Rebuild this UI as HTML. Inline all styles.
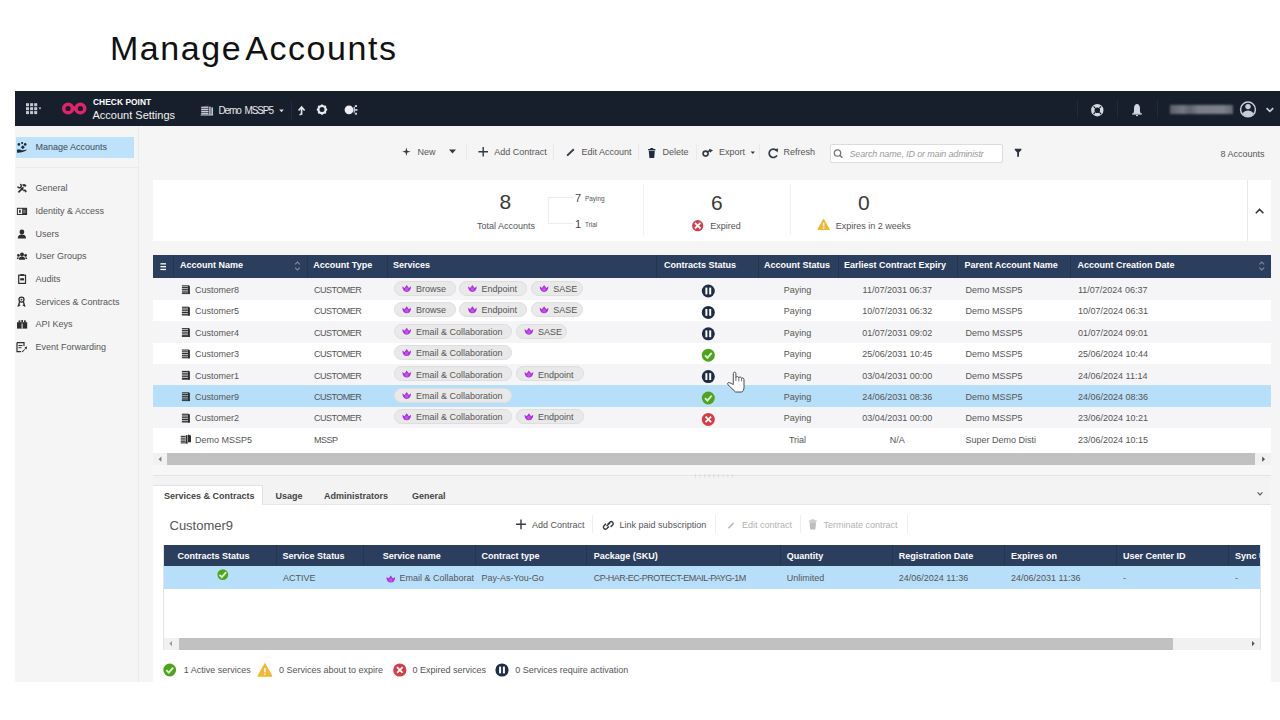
<!DOCTYPE html>
<html><head><meta charset="utf-8">
<style>
*{box-sizing:border-box;margin:0;padding:0}
html,body{width:1280px;height:720px;overflow:hidden;background:#fff}
body{position:relative;font-family:"Liberation Sans",sans-serif;font-size:9px;color:#555}
.a{position:absolute;white-space:nowrap}
#title{left:110px;top:28px;font-size:34px;letter-spacing:1.55px;word-spacing:-6px;color:#111;line-height:40px}
#nav{left:15px;top:91px;width:1265px;height:34.5px;background:#181f2c}
#side{left:15px;top:126px;width:124px;height:556px;background:#f5f5f5;border-right:1px solid #ebebeb}
#main{left:139px;top:126px;width:1141px;height:556px;background:#f5f5f5}
.t9{font-size:9px;line-height:9px}
.hw{color:#fff;font-weight:bold}
.up{letter-spacing:-0.5px}
.card{background:#fff}
.sep{position:absolute;width:1px;background:#eaeaea}
.hdr{background:#2c3e5d;color:#fff;font-weight:bold}
.row{position:absolute;left:153px;width:1118px;height:22px}
.chip{position:absolute;height:15px;border-radius:8px;background:#e9e9ea;border:1px solid #dedede;color:#555;line-height:14px}
</style></head><body>
<div id="title" class="a">Manage Accounts</div>

<!-- NAVBAR -->
<div id="nav" class="a"></div>
<div class="a" style="left:93px;top:97.5px;font-size:8.4px;line-height:9px;font-weight:bold;color:#fff;letter-spacing:0.05px">CHECK POINT</div>
<div class="a" style="left:92.5px;top:109.5px;font-size:11px;line-height:11px;color:#f2f2f2">Account Settings</div>
<div class="a" style="left:218.5px;top:106px;font-size:10px;line-height:10px;color:#e8e8ea;letter-spacing:-1.1px;word-spacing:2px">Demo MSSP5</div>
<div class="a" style="left:291px;top:100.5px;width:1px;height:18.5px;background:#232a38"></div>
<div class="a" style="left:1076.5px;top:99.5px;width:1px;height:18px;background:#232a38"></div>
<div class="a" style="left:1116.5px;top:99.5px;width:1px;height:18px;background:#232a38"></div>
<div class="a" style="left:1156.5px;top:99.5px;width:1px;height:18px;background:#232a38"></div>
<div class="a" style="left:1170px;top:105px;width:63px;height:9px;background:linear-gradient(90deg,#5d616a 0,#767a83 20%,#5f636c 32%,#7a7e87 45%,#7d818a 85%,#62666f 100%);filter:blur(1px)"></div>

<!-- SIDEBAR -->
<div id="side" class="a"></div>
<div class="a" style="left:16px;top:137px;width:118.4px;height:20.8px;background:#bee2fa"></div>
<div class="a" style="left:15px;top:166.5px;width:123px;height:1px;background:#ebebeb"></div>
<div class="a t9" style="left:35.5px;top:143px;color:#3d4a58">Manage Accounts</div>
<div class="a t9" style="left:35.5px;top:184px">General</div>
<div class="a t9" style="left:35.5px;top:207px">Identity &amp; Access</div>
<div class="a t9" style="left:35.5px;top:230px">Users</div>
<div class="a t9" style="left:35.5px;top:252px">User Groups</div>
<div class="a t9" style="left:35.5px;top:275px">Audits</div>
<div class="a t9" style="left:35.5px;top:298px">Services &amp; Contracts</div>
<div class="a t9" style="left:35.5px;top:320px">API Keys</div>
<div class="a t9" style="left:35.5px;top:343px">Event Forwarding</div>
<div id="main" class="a"></div>
<!-- toolbar -->
<div class="a t9" style="left:417.5px;top:148px">New</div>
<div class="a t9" style="left:494.3px;top:148px">Add Contract</div>
<div class="a t9" style="left:581.5px;top:148px">Edit Account</div>
<div class="a t9" style="left:662.5px;top:148px">Delete</div>
<div class="a t9" style="left:718.9px;top:148px">Export</div>
<div class="a t9" style="left:783.5px;top:148px">Refresh</div>
<div class="sep" style="left:466px;top:144px;height:16px"></div>
<div class="sep" style="left:553px;top:144px;height:16px"></div>
<div class="sep" style="left:638px;top:144px;height:16px"></div>
<div class="sep" style="left:696px;top:144px;height:16px"></div>
<div class="sep" style="left:759px;top:144px;height:16px"></div>
<div class="a" style="left:829.5px;top:144px;width:173px;height:18.5px;background:#fff;border:1px solid #dcdcdc;border-radius:2px"></div>
<div class="a t9" style="left:849.5px;top:150px;font-style:italic;color:#999;width:134px;overflow:hidden;letter-spacing:-0.15px">Search name, ID or main administr</div>
<div class="a t9" style="left:1220.4px;top:150px">8 Accounts</div>
<!-- TABLE START -->
<div class="a hdr" style="left:153px;top:254.8px;width:1118px;height:23px"></div>
<div class="a" style="left:173px;top:254.8px;width:1px;height:23px;background:#24354f"></div>
<div class="a" style="left:306.5px;top:254.8px;width:1px;height:23px;background:#24354f"></div>
<div class="a" style="left:386.5px;top:254.8px;width:1px;height:23px;background:#24354f"></div>
<div class="a" style="left:656px;top:254.8px;width:1px;height:23px;background:#24354f"></div>
<div class="a" style="left:757.5px;top:254.8px;width:1px;height:23px;background:#24354f"></div>
<div class="a" style="left:837.5px;top:254.8px;width:1px;height:23px;background:#24354f"></div>
<div class="a" style="left:956.5px;top:254.8px;width:1px;height:23px;background:#24354f"></div>
<div class="a" style="left:1070.2px;top:254.8px;width:1px;height:23px;background:#24354f"></div>
<div class="a t9 hw" style="left:180px;top:261px">Account Name</div>
<div class="a t9 hw" style="left:313.3px;top:261px">Account Type</div>
<div class="a t9 hw" style="left:393px;top:261px">Services</div>
<div class="a t9 hw" style="left:664px;top:261px">Contracts Status</div>
<div class="a t9 hw" style="left:764px;top:261px">Account Status</div>
<div class="a t9 hw" style="left:844px;top:261px">Earliest Contract Expiry</div>
<div class="a t9 hw" style="left:964.5px;top:261px">Parent Account Name</div>
<div class="a t9 hw" style="left:1077.6px;top:261px">Account Creation Date</div>
<div class="a" style="left:153px;top:278.4px;width:1118px;height:21.4px;background:#f5f5f7"></div>
<div class="a t9" style="left:195px;top:285.9px">Customer8</div>
<div class="a t9 up" style="left:314px;top:285.9px">CUSTOMER</div>
<div class="chip" style="left:393.6px;top:280.7px;width:62px"></div>
<div class="a t9" style="left:415.9px;top:284.9px">Browse</div>
<div class="chip" style="left:459.3px;top:280.7px;width:68px"></div>
<div class="a t9" style="left:481.6px;top:284.9px">Endpoint</div>
<div class="chip" style="left:531.0px;top:280.7px;width:51.5px"></div>
<div class="a t9" style="left:553.3px;top:284.9px">SASE</div>
<div class="a t9" style="left:757.5px;width:80px;text-align:center;top:285.9px">Paying</div>
<div class="a t9" style="left:837.5px;width:119.5px;text-align:center;top:285.9px">11/07/2031 06:37</div>
<div class="a t9" style="left:965.5px;top:285.9px">Demo MSSP5</div>
<div class="a t9" style="left:1078px;top:285.9px">11/07/2024 06:37</div>
<div class="a" style="left:153px;top:299.8px;width:1118px;height:21.4px;background:#fff"></div>
<div class="a t9" style="left:195px;top:307.3px">Customer5</div>
<div class="a t9 up" style="left:314px;top:307.3px">CUSTOMER</div>
<div class="chip" style="left:393.6px;top:302.1px;width:62px"></div>
<div class="a t9" style="left:415.9px;top:306.3px">Browse</div>
<div class="chip" style="left:459.3px;top:302.1px;width:68px"></div>
<div class="a t9" style="left:481.6px;top:306.3px">Endpoint</div>
<div class="chip" style="left:531.0px;top:302.1px;width:51.5px"></div>
<div class="a t9" style="left:553.3px;top:306.3px">SASE</div>
<div class="a t9" style="left:757.5px;width:80px;text-align:center;top:307.3px">Paying</div>
<div class="a t9" style="left:837.5px;width:119.5px;text-align:center;top:307.3px">10/07/2031 06:32</div>
<div class="a t9" style="left:965.5px;top:307.3px">Demo MSSP5</div>
<div class="a t9" style="left:1078px;top:307.3px">10/07/2024 06:31</div>
<div class="a" style="left:153px;top:321.2px;width:1118px;height:21.4px;background:#f5f5f7"></div>
<div class="a t9" style="left:195px;top:328.7px">Customer4</div>
<div class="a t9 up" style="left:314px;top:328.7px">CUSTOMER</div>
<div class="chip" style="left:393.6px;top:323.5px;width:118.5px"></div>
<div class="a t9" style="left:415.9px;top:327.7px">Email &amp; Collaboration</div>
<div class="chip" style="left:515.8000000000001px;top:323.5px;width:51.5px"></div>
<div class="a t9" style="left:538.1px;top:327.7px">SASE</div>
<div class="a t9" style="left:757.5px;width:80px;text-align:center;top:328.7px">Paying</div>
<div class="a t9" style="left:837.5px;width:119.5px;text-align:center;top:328.7px">01/07/2031 09:02</div>
<div class="a t9" style="left:965.5px;top:328.7px">Demo MSSP5</div>
<div class="a t9" style="left:1078px;top:328.7px">01/07/2024 09:01</div>
<div class="a" style="left:153px;top:342.6px;width:1118px;height:21.4px;background:#fff"></div>
<div class="a t9" style="left:195px;top:350.1px">Customer3</div>
<div class="a t9 up" style="left:314px;top:350.1px">CUSTOMER</div>
<div class="chip" style="left:393.6px;top:344.9px;width:118.5px"></div>
<div class="a t9" style="left:415.9px;top:349.1px">Email &amp; Collaboration</div>
<div class="a t9" style="left:757.5px;width:80px;text-align:center;top:350.1px">Paying</div>
<div class="a t9" style="left:837.5px;width:119.5px;text-align:center;top:350.1px">25/06/2031 10:45</div>
<div class="a t9" style="left:965.5px;top:350.1px">Demo MSSP5</div>
<div class="a t9" style="left:1078px;top:350.1px">25/06/2024 10:44</div>
<div class="a" style="left:153px;top:364.0px;width:1118px;height:21.4px;background:#f5f5f7"></div>
<div class="a t9" style="left:195px;top:371.5px">Customer1</div>
<div class="a t9 up" style="left:314px;top:371.5px">CUSTOMER</div>
<div class="chip" style="left:393.6px;top:366.3px;width:118.5px"></div>
<div class="a t9" style="left:415.9px;top:370.5px">Email &amp; Collaboration</div>
<div class="chip" style="left:515.8000000000001px;top:366.3px;width:68px"></div>
<div class="a t9" style="left:538.1px;top:370.5px">Endpoint</div>
<div class="a t9" style="left:757.5px;width:80px;text-align:center;top:371.5px">Paying</div>
<div class="a t9" style="left:837.5px;width:119.5px;text-align:center;top:371.5px">03/04/2031 00:00</div>
<div class="a t9" style="left:965.5px;top:371.5px">Demo MSSP5</div>
<div class="a t9" style="left:1078px;top:371.5px">24/06/2024 11:14</div>
<div class="a" style="left:153px;top:385.4px;width:1118px;height:21.4px;background:#b8dff9"></div>
<div class="a t9" style="left:195px;top:392.9px">Customer9</div>
<div class="a t9 up" style="left:314px;top:392.9px">CUSTOMER</div>
<div class="chip" style="left:393.6px;top:387.7px;width:118.5px"></div>
<div class="a t9" style="left:415.9px;top:391.9px">Email &amp; Collaboration</div>
<div class="a t9" style="left:757.5px;width:80px;text-align:center;top:392.9px">Paying</div>
<div class="a t9" style="left:837.5px;width:119.5px;text-align:center;top:392.9px">24/06/2031 08:36</div>
<div class="a t9" style="left:965.5px;top:392.9px">Demo MSSP5</div>
<div class="a t9" style="left:1078px;top:392.9px">24/06/2024 08:36</div>
<div class="a" style="left:153px;top:406.8px;width:1118px;height:21.4px;background:#f5f5f7"></div>
<div class="a t9" style="left:195px;top:414.3px">Customer2</div>
<div class="a t9 up" style="left:314px;top:414.3px">CUSTOMER</div>
<div class="chip" style="left:393.6px;top:409.1px;width:118.5px"></div>
<div class="a t9" style="left:415.9px;top:413.3px">Email &amp; Collaboration</div>
<div class="chip" style="left:515.8000000000001px;top:409.1px;width:68px"></div>
<div class="a t9" style="left:538.1px;top:413.3px">Endpoint</div>
<div class="a t9" style="left:757.5px;width:80px;text-align:center;top:414.3px">Paying</div>
<div class="a t9" style="left:837.5px;width:119.5px;text-align:center;top:414.3px">03/04/2031 00:00</div>
<div class="a t9" style="left:965.5px;top:414.3px">Demo MSSP5</div>
<div class="a t9" style="left:1078px;top:414.3px">23/06/2024 10:21</div>
<div class="a" style="left:153px;top:428.2px;width:1118px;height:21.4px;background:#fff"></div>
<div class="a t9" style="left:195px;top:435.7px">Demo MSSP5</div>
<div class="a t9 up" style="left:314px;top:435.7px">MSSP</div>
<div class="a t9" style="left:757.5px;width:80px;text-align:center;top:435.7px">Trial</div>
<div class="a t9" style="left:837.5px;width:119.5px;text-align:center;top:435.7px">N/A</div>
<div class="a t9" style="left:965.5px;top:435.7px">Super Demo Disti</div>
<div class="a t9" style="left:1078px;top:435.7px">23/06/2024 10:15</div>
<!-- TABLE END -->
<!-- BOTTOM START -->
<div class="a" style="left:153px;top:449.6px;width:1118px;height:3.8px;background:#fff"></div>
<div class="a" style="left:153px;top:453.4px;width:1118px;height:11.6px;background:#f1f1f1"></div>
<div class="a" style="left:167.4px;top:453.4px;width:1088px;height:11.6px;background:#c1c1c1"></div>
<div class="a" style="left:153px;top:465px;width:1118px;height:10px;background:#f7f7f7"></div>
<div class="a" style="left:153px;top:475px;width:1118px;height:1px;background:#e4e4e4"></div>
<div class="a" style="left:153px;top:476px;width:1118px;height:28.5px;background:#f3f3f3"></div>
<div class="a" style="left:153px;top:504px;width:1118px;height:1px;background:#e6e6e6"></div>
<div class="a" style="left:153px;top:485.4px;width:110.3px;height:19.6px;background:#fff;border-top:1px solid #e2e2e2;border-right:1px solid #e2e2e2"></div>
<div class="a t9" style="left:164px;top:491.5px;font-weight:bold;color:#444">Services &amp; Contracts</div>
<div class="a t9" style="left:275.4px;top:491.5px;font-weight:bold;color:#444">Usage</div>
<div class="a t9" style="left:323.9px;top:491.5px;font-weight:bold;color:#444">Administrators</div>
<div class="a t9" style="left:412px;top:491.5px;font-weight:bold;color:#444">General</div>
<div class="a card" style="left:153px;top:505px;width:1118px;height:177px"></div>
<div class="a" style="left:169.5px;top:519px;font-size:13px;line-height:13px;color:#555">Customer9</div>
<div class="a t9" style="left:532px;top:520.5px;color:#555">Add Contract</div>
<div class="a t9" style="left:619.6px;top:520.5px;color:#555">Link paid subscription</div>
<div class="a t9" style="left:742px;top:520.5px;color:#b2b2b2">Edit contract</div>
<div class="a t9" style="left:823.5px;top:520.5px;color:#b2b2b2">Terminate contract</div>
<div class="sep" style="left:591.8px;top:515px;height:18px;background:#eeeeee"></div>
<div class="sep" style="left:714.9px;top:515px;height:18px;background:#eeeeee"></div>
<div class="sep" style="left:800px;top:515px;height:18px;background:#eeeeee"></div>
<div class="sep" style="left:907.2px;top:515px;height:18px;background:#eeeeee"></div>
<div class="a" style="left:163px;top:545px;width:1097.5px;height:105px;background:#fff;border-left:1px solid #e4e4e4;border-right:1px solid #e4e4e4"></div>
<div class="a hdr" style="left:164px;top:545px;width:1096px;height:21px"></div>
<div class="a" style="left:275.5px;top:545px;width:1px;height:21px;background:#24354f"></div>
<div class="a" style="left:362.7px;top:545px;width:1px;height:21px;background:#24354f"></div>
<div class="a" style="left:474.5px;top:545px;width:1px;height:21px;background:#24354f"></div>
<div class="a" style="left:586px;top:545px;width:1px;height:21px;background:#24354f"></div>
<div class="a" style="left:779.6px;top:545px;width:1px;height:21px;background:#24354f"></div>
<div class="a" style="left:891.7px;top:545px;width:1px;height:21px;background:#24354f"></div>
<div class="a" style="left:1003.8px;top:545px;width:1px;height:21px;background:#24354f"></div>
<div class="a" style="left:1116px;top:545px;width:1px;height:21px;background:#24354f"></div>
<div class="a" style="left:1228px;top:545px;width:1px;height:21px;background:#24354f"></div>
<div class="a t9 hw" style="left:177.4px;top:552px;">Contracts Status</div>
<div class="a t9 hw" style="left:282.6px;top:552px;">Service Status</div>
<div class="a t9 hw" style="left:382.8px;top:552px;">Service name</div>
<div class="a t9 hw" style="left:481.6px;top:552px;">Contract type</div>
<div class="a t9 hw" style="left:593.7px;top:552px;">Package (SKU)</div>
<div class="a t9 hw" style="left:786.7px;top:552px;">Quantity</div>
<div class="a t9 hw" style="left:898.8px;top:552px;">Registration Date</div>
<div class="a t9 hw" style="left:1011px;top:552px;">Expires on</div>
<div class="a t9 hw" style="left:1123px;top:552px;">User Center ID</div>
<div class="a t9 hw" style="left:1235px;top:552px;width:25px;overflow:hidden;">Sync U</div>
<div class="a" style="left:164px;top:566px;width:1096px;height:23px;background:#b8dff9"></div>
<div class="a t9" style="left:283px;top:573.5px;">ACTIVE</div>
<div class="a t9" style="left:399.6px;top:573.5px;width:74.4px;overflow:hidden;">Email &amp; Collaborat</div>
<div class="a t9" style="left:481.6px;top:573.5px;">Pay-As-You-Go</div>
<div class="a t9" style="left:593.7px;top:573.5px;letter-spacing:-0.5px;">CP-HAR-EC-PROTECT-EMAIL-PAYG-1M</div>
<div class="a t9" style="left:786.7px;top:573.5px;">Unlimited</div>
<div class="a t9" style="left:898.8px;top:573.5px;">24/06/2024 11:36</div>
<div class="a t9" style="left:1011px;top:573.5px;">24/06/2031 11:36</div>
<div class="a t9" style="left:1123px;top:573.5px;">-</div>
<div class="a t9" style="left:1235px;top:573.5px;">-</div>
<div class="a" style="left:164px;top:637.5px;width:1096px;height:12px;background:#f1f1f1"></div>
<div class="a" style="left:178.5px;top:637.5px;width:994px;height:12px;background:#c1c1c1"></div>
<div class="a t9" style="left:183.7px;top:666px">1 Active services</div>
<div class="a t9" style="left:279px;top:666px">0 Services about to expire</div>
<div class="a t9" style="left:412.5px;top:666px">0 Expired services</div>
<div class="a t9" style="left:515.3px;top:666px">0 Services require activation</div>
<!-- BOTTOM END -->
<!-- summary card -->
<div class="a card" style="left:153px;top:180px;width:1118px;height:60.5px"></div>
<div class="sep" style="left:1247px;top:180px;height:60.5px;background:#e8e8e8"></div>
<div class="sep" style="left:642.5px;top:184px;height:51px;background:#f0f0f0"></div>
<div class="sep" style="left:790px;top:184px;height:51px;background:#f0f0f0"></div>
<div class="a" style="left:499.5px;top:191px;font-size:21px;line-height:21px;color:#3a3a3a">8</div>
<div class="a t9" style="left:477px;top:221.5px">Total Accounts</div>
<div class="a" style="left:548px;top:196.5px;width:25px;height:27px;border:1px solid #ececec;border-right:none"></div>
<div class="a" style="left:575px;top:192.5px;font-size:11px;line-height:11px;color:#444">7</div>
<div class="a" style="left:585px;top:194.5px;font-size:6.4px;line-height:7px;color:#555">Paying</div>
<div class="a" style="left:575px;top:219px;font-size:11px;line-height:11px;color:#444">1</div>
<div class="a" style="left:585px;top:221px;font-size:6.4px;line-height:7px;color:#555">Trial</div>
<div class="a" style="left:711px;top:192px;font-size:21px;line-height:21px;color:#3a3a3a">6</div>
<div class="a t9" style="left:710.3px;top:221.5px">Expired</div>
<div class="a" style="left:858px;top:192px;font-size:21px;line-height:21px;color:#3a3a3a">0</div>
<div class="a t9" style="left:835.7px;top:221.5px">Expires in 2 weeks</div>

<svg class="a" style="left:0;top:0;z-index:10" width="1280" height="720" viewBox="0 0 1280 720">
<!-- grid icon -->
<g fill="#c5c9d1">
<rect x="26" y="103.2" width="3" height="3"/><rect x="30.1" y="103.2" width="3" height="3"/><rect x="34.2" y="103.2" width="3" height="3"/>
<rect x="26" y="107.2" width="3" height="3"/><rect x="30.1" y="107.2" width="3" height="3"/><rect x="34.2" y="107.2" width="3" height="3"/>
<rect x="26" y="111.1" width="3" height="3"/><rect x="30.1" y="111.1" width="3" height="3"/><rect x="34.2" y="111.1" width="3" height="3"/>
<path d="M38.6,107.4 L41.4,107.4 L40,109.4Z"/>
</g>
<!-- logo -->
<g fill="none" stroke="#e0246c"><circle cx="68.1" cy="108.5" r="4.35" stroke-width="3.5"/><circle cx="80.4" cy="108.5" r="4.35" stroke-width="3.5"/>
<path d="M71.2,105.6 L77.3,111.4 M71.2,111.4 L77.3,105.6" stroke-width="2.6"/></g>
<!-- building nav -->
<g fill="#c9cdd4">
<path d="M201.2,106.6 L208.4,105.4 L208.4,115 L201.2,115Z" opacity="0.35"/>
<rect x="201.2" y="106.8" width="7.2" height="1.1"/><rect x="201.2" y="108.9" width="7.2" height="1.1"/><rect x="201.2" y="111" width="7.2" height="1.1"/><rect x="201.2" y="113.1" width="7.2" height="1.1"/>
<rect x="209.2" y="106.6" width="1.4" height="8.4"/><rect x="211.4" y="107.4" width="1.6" height="7.6"/>
<rect x="200.6" y="114.6" width="12.6" height="0.9"/>
</g>
<path d="M279.2,109.6 L283.8,109.6 L281.5,112.2Z" fill="#d8dbe0"/>
<!-- upload -->
<path d="M301.6,114.8 L301.6,108.2 M298.6,110.6 L301.6,107 L304.6,110.6" fill="none" stroke="#e6e8ec" stroke-width="1.6"/>
<path d="M301.6,114 L299.5,114.8" stroke="#e6e8ec" stroke-width="1.4"/>
<!-- gear -->
<circle cx="322" cy="109.6" r="3.6" fill="none" stroke="#e8eaee" stroke-width="2.2"/>
<g stroke="#e8eaee" stroke-width="1.8">
<path d="M322,104.4 V106 M322,113.2 V114.8 M316.8,109.6 H318.4 M325.6,109.6 H327.2 M318.3,105.9 L319.4,107 M324.6,112.2 L325.7,113.3 M318.3,113.3 L319.4,112.2 M324.6,107 L325.7,105.9"/>
</g>
<!-- broadcast -->
<circle cx="349" cy="109.8" r="4.4" fill="#eceef2"/>
<g fill="#d8dbe0"><rect x="354.8" y="105.2" width="2.2" height="1.8"/><rect x="355.2" y="109" width="2.2" height="1.8"/><rect x="354.8" y="112.8" width="2.2" height="1.8"/><rect x="353.6" y="107" width="1.3" height="5.6"/></g>
<!-- lifebuoy -->
<circle cx="1097.3" cy="110.2" r="4.5" fill="none" stroke="#d5d9e2" stroke-width="3.4"/>
<g stroke="#181f2c" stroke-width="1.1"><path d="M1093.5,106.4 L1095.3,108.2 M1101.1,106.4 L1099.3,108.2 M1093.5,114 L1095.3,112.2 M1101.1,114 L1099.3,112.2"/></g>
<!-- bell -->
<path d="M1133,113.8 C1134.3,112.2 1134,110.5 1134,108.5 C1134,105.6 1135.3,104 1137,104 C1138.7,104 1140,105.6 1140,108.5 C1140,110.5 1139.7,112.2 1141,113.8 Z" fill="#d3d8e2"/>
<rect x="1132.2" y="113.3" width="9.6" height="1.3" fill="#d3d8e2"/>
<rect x="1136" y="115" width="2" height="1.1" fill="#c9ced8"/>
<!-- avatar -->
<circle cx="1248" cy="109.4" r="7.4" fill="none" stroke="#c8ccd6" stroke-width="1.5"/>
<circle cx="1248" cy="106.6" r="2.7" fill="#c8ccd6"/>
<path d="M1242.6,113.6 C1243.8,111 1246,110.4 1248,110.4 C1250,110.4 1252.2,111 1253.4,113.6 C1252,115.6 1250,116.5 1248,116.5 C1246,116.5 1244,115.6 1242.6,113.6Z" fill="#c8ccd6"/>
<path d="M1266.6,108.2 L1269.8,111.4 L1273.2,108.2" fill="none" stroke="#c8ccd6" stroke-width="1.7"/>
<!-- MISC START -->
<g fill="#1f2b3e"><circle cx="18.9" cy="144.4" r="1.3"/><circle cx="22.1" cy="143" r="1.1"/><circle cx="25.2" cy="144.4" r="1.3"/><path d="M22.8,145.3 L24.8,147.3 L22.8,149.3 L20.8,147.3Z"/><path d="M17,149.4 L20.5,149.4 C21.5,150.4 23,150.6 26.5,149.6 L26.5,150.3 C24,151.9 21,152.9 17,152.7Z"/></g>
<g fill="none" stroke="#2e2e2e"><path d="M18.4,192.4 L23.4,187.4" stroke-width="1.7"/><path d="M20.2,184.2 A1.9,1.9 0 1 1 17.6,186.6" stroke-width="1.5"/><path d="M20.6,187.6 L23.4,190.4" stroke-width="1.3"/></g><g fill="#2e2e2e"><path d="M22,184.4 L24.6,184 L26.6,185.6 L25.6,186.8 L23.2,186.2Z"/><path d="M23.2,190 C24.2,189.2 26,189.4 26.8,191.2 L25.6,192.8 C25.4,191.6 24.6,191 23.6,191.4Z"/></g>
<rect x="17.4" y="208.3" width="9.2" height="6.2" fill="none" stroke="#2e2e2e" stroke-width="1"/><rect x="22.2" y="208.3" width="4.4" height="6.2" fill="#2e2e2e"/><rect x="23.2" y="209.6" width="2.4" height="3.6" fill="#777"/><ellipse cx="19.9" cy="211.4" rx="0.9" ry="1.8" fill="#2e2e2e"/>
<g fill="#2e2e2e"><circle cx="21.9" cy="232" r="2.4"/><path d="M17.8,238.4 C17.8,235.6 19.6,234.6 21.9,234.6 C24.2,234.6 26,235.6 26,238.4Z"/></g>
<g fill="#2e2e2e"><circle cx="22" cy="254.4" r="2"/><path d="M18.8,259.8 C18.8,257.6 20.2,256.6 22,256.6 C23.8,256.6 25.2,257.6 25.2,259.8Z"/><circle cx="18.4" cy="255.4" r="1.4"/><path d="M16.8,259 C16.8,257.6 17.6,256.9 18.6,256.9 L18.4,259Z"/><circle cx="25.6" cy="255.4" r="1.4"/><path d="M27.2,259 C27.2,257.6 26.4,256.9 25.4,256.9 L25.6,259Z"/></g>
<rect x="18.7" y="275.2" width="6.8" height="8.2" fill="none" stroke="#2e2e2e" stroke-width="1.2"/><rect x="20.3" y="274.1" width="3.6" height="1.8" fill="#2e2e2e"/><rect x="20.2" y="278.2" width="3.8" height="2.2" fill="#2e2e2e"/>
<circle cx="21.5" cy="299.6" r="2.5" fill="none" stroke="#2e2e2e" stroke-width="1.3"/><circle cx="21.5" cy="299.6" r="0.9" fill="#2e2e2e"/><path d="M19.6,301.8 L18.4,305.8 L20.2,305 M23.4,301.8 L24.6,305.8 L22.8,305" fill="none" stroke="#2e2e2e" stroke-width="1.3"/>
<g fill="#2e2e2e"><rect x="17" y="322.2" width="10.2" height="6.4"/><rect x="18.6" y="320.4" width="1.8" height="2"/><rect x="21.4" y="320" width="1.6" height="2.2"/><rect x="24" y="320.4" width="1.8" height="2"/></g><rect x="21.6" y="323.4" width="1" height="5.2" fill="#f4f4f4"/>
<path d="M17,342.6 L24,342.6 L24,346 M17,342.6 L17,351.6 L21,351.6" fill="none" stroke="#2e2e2e" stroke-width="1.2"/><rect x="18.5" y="345" width="4" height="1" fill="#2e2e2e"/><rect x="18.5" y="347.2" width="3" height="1" fill="#2e2e2e"/><path d="M21.5,351.8 L25.5,348.2 L24.4,347.2 L27,346.6 L26.6,349.4 L25.6,348.8 L22.6,352.2Z" fill="#2e2e2e"/>
<path d="M406.4,147.4 L407.3,150.8 L410.7,151.7 L407.3,152.6 L406.4,156 L405.5,152.6 L402.1,151.7 L405.5,150.8Z" fill="#333a45"/>
<path d="M449,149.6 L456,149.6 L452.5,153.6Z" fill="#333a45"/>
<path d="M483.2,147 V156.6 M478.4,151.8 H488" stroke="#333a45" stroke-width="1.4"/>
<path d="M567.4,155.4 L573.8,149.2" stroke="#333a45" stroke-width="1.9"/><path d="M566.6,156.2 L567.2,154.4 L568.4,155.6Z" fill="#333a45"/>
<g fill="#1f2b3e"><rect x="648.2" y="149" width="7.2" height="1.4"/><rect x="650.4" y="148" width="2.8" height="1.2"/><path d="M648.8,151 L654.8,151 L654.2,158 L649.4,158Z"/></g>
<circle cx="705.6" cy="153.6" r="2.5" fill="none" stroke="#333a45" stroke-width="1.6"/><path d="M706.8,152.4 L710,150.4" stroke="#333a45" stroke-width="1.6"/><path d="M709,148.8 L713,150.2 L710,152.8Z" fill="#333a45"/>
<path d="M750.6,151.4 L755,151.4 L752.8,154Z" fill="#333a45"/>
<path d="M776.4,150.4 A4.2,4.2 0 1 0 777,155.4" fill="none" stroke="#333a45" stroke-width="1.7"/><path d="M774.2,149.2 L778.2,148.6 L777.6,152.6Z" fill="#333a45"/>
<circle cx="837.5" cy="153" r="3.2" fill="none" stroke="#777" stroke-width="1.3"/><path d="M839.8,155.4 L842.4,157.8" stroke="#777" stroke-width="1.5"/>
<path d="M1014.8,148.8 L1021.4,148.8 L1021.4,150 L1019,152.6 L1019,156.8 L1017.2,156.8 L1017.2,152.6 L1014.8,150Z" fill="#2a3240"/>
<path d="M1255.8,213.2 L1259.6,209.4 L1263.4,213.2" fill="none" stroke="#333" stroke-width="1.5"/>
<circle cx="697.70" cy="225.70" r="5.6" fill="#d83a48"/><path d="M694.90,222.90 L700.50,228.50 M700.50,222.90 L694.90,228.50" stroke="#fff" stroke-width="1.9"/>
<path d="M823.60,219.20 L829.40,229.60 L817.80,229.60Z" fill="#f1b72e" stroke="#f1b72e" stroke-width="1" stroke-linejoin="round"/><rect x="822.85" y="222.84" width="1.5" height="3.64" fill="#fff"/><rect x="822.85" y="227.31" width="1.5" height="1.5" fill="#fff"/>
<g fill="#fff"><rect x="160.4" y="263.2" width="5.6" height="1.3"/><rect x="160.4" y="266" width="5.6" height="1.3"/><rect x="160.4" y="268.8" width="5.6" height="1.3"/></g>
<path d="M295,264.4 L297.4,262 L299.8,264.4 M295,267.6 L297.4,270 L299.8,267.6" fill="none" stroke="#7d8aa0" stroke-width="1.1"/>
<path d="M1259.4,264.4 L1261.8,262 L1264.2,264.4 M1259.4,267.6 L1261.8,270 L1264.2,267.6" fill="none" stroke="#7d8aa0" stroke-width="1.1"/>
<path d="M158.6,459.2 L161.4,456.6 L161.4,461.8Z" fill="#7a7a7a"/>
<path d="M1265,459.2 L1262.2,456.6 L1262.2,461.8Z" fill="#505050"/>
<path d="M169.4,643.6 L172,641 L172,646.2Z" fill="#9a9a9a"/>
<path d="M1254.6,643.6 L1252,641 L1252,646.2Z" fill="#505050"/>
<g fill="#cfcfcf"><rect x="695.0" y="474.2" width="1" height="1"/><rect x="695.0" y="476.4" width="1" height="1"/><rect x="699.6" y="474.2" width="1" height="1"/><rect x="699.6" y="476.4" width="1" height="1"/><rect x="704.2" y="474.2" width="1" height="1"/><rect x="704.2" y="476.4" width="1" height="1"/><rect x="708.8" y="474.2" width="1" height="1"/><rect x="708.8" y="476.4" width="1" height="1"/><rect x="713.4" y="474.2" width="1" height="1"/><rect x="713.4" y="476.4" width="1" height="1"/><rect x="718.0" y="474.2" width="1" height="1"/><rect x="718.0" y="476.4" width="1" height="1"/><rect x="722.6" y="474.2" width="1" height="1"/><rect x="722.6" y="476.4" width="1" height="1"/><rect x="727.2" y="474.2" width="1" height="1"/><rect x="727.2" y="476.4" width="1" height="1"/><rect x="731.8" y="474.2" width="1" height="1"/><rect x="731.8" y="476.4" width="1" height="1"/></g>
<path d="M1257.6,492.4 L1260,494.8 L1262.4,492.4" fill="none" stroke="#555" stroke-width="1.2"/>
<path d="M521,519.4 V529.2 M516.1,524.3 H525.9" stroke="#333a45" stroke-width="1.4"/>
<g fill="none" stroke="#333a45" stroke-width="1.4"><path d="M607.6,524.4 L610,522 A2,2 0 0 1 612.8,524.8 L610.6,527"/><path d="M609,526.4 L606.6,528.8 A2,2 0 0 1 603.8,526 L606,523.8"/><path d="M606.6,526.2 L610,522.8"/></g>
<path d="M728.4,528.2 L733.6,523" stroke="#b8b8b8" stroke-width="1.5"/>
<g fill="#bdbdbd"><rect x="809" y="520.4" width="7.6" height="1.3"/><rect x="811.2" y="519.4" width="3.2" height="1.2"/><path d="M809.6,522.2 L816,522.2 L815.4,529.4 L810.2,529.4Z"/></g>
<circle cx="222.80" cy="574.60" r="5.4" fill="#4ea41c"/><path d="M219.50,574.80 L221.90,577.20 L226.20,572.20" fill="none" stroke="#dff5cf" stroke-width="1.9"/>
<path d="M386.40,577.00 L388.60,578.60 L390.80,575.60 L393.00,578.60 L395.20,577.00 C395.00,580.80 393.30,582.60 390.80,582.60 C388.30,582.60 386.60,580.80 386.40,577.00Z" fill="#a532d6"/><ellipse cx="390.80" cy="580.00" rx="1.8" ry="2" fill="#c94ef0"/>
<circle cx="169.70" cy="670.00" r="6.4" fill="#4ea41c"/><path d="M166.40,670.20 L168.80,672.60 L173.10,667.60" fill="none" stroke="#dff5cf" stroke-width="1.9"/>
<path d="M264.90,663.60 L272.00,676.20 L257.80,676.20Z" fill="#f1b72e" stroke="#f1b72e" stroke-width="1" stroke-linejoin="round"/><rect x="264.15" y="668.01" width="1.5" height="4.41" fill="#fff"/><rect x="264.15" y="673.43" width="1.5" height="1.5" fill="#fff"/>
<circle cx="399.80" cy="670.00" r="6.6" fill="#d83a48"/><path d="M397.00,667.20 L402.60,672.80 M402.60,667.20 L397.00,672.80" stroke="#fff" stroke-width="1.9"/>
<circle cx="502.00" cy="670.00" r="6.6" fill="#1f2c45"/><rect x="499.10" y="666.60" width="2" height="6.8" fill="#fff"/><rect x="502.90" y="666.60" width="2" height="6.8" fill="#fff"/>
<path d="M733.3,383.4 L733.3,373.6 C733.3,371.6 735.9,371.6 735.9,373.6 L735.9,377.6 C736.2,376.2 738.6,376.2 738.8,377.8 C739.2,376.8 741.4,376.8 741.6,378.4 C742,377.6 744,377.8 744,379.6 L744,387.6 C744,389.6 743,391.2 742,392 L735.6,392 L728,384.8 C727,383.8 727.6,382.4 729,382.6 C730.6,382.8 732,383.8 733.3,384.6Z" fill="#fff" stroke="#3a3a3a" stroke-width="0.9" stroke-linejoin="round"/><path d="M735.9,377.6 L735.9,381 M738.8,377.8 L738.8,381.4 M741.6,378.4 L741.6,381.4" stroke="#3a3a3a" stroke-width="0.7"/>
<!-- MISC END -->
<!-- TICONS START -->
<path d="M402.30,286.30 L404.50,287.90 L406.70,284.90 L408.90,287.90 L411.10,286.30 C410.90,290.10 409.20,291.90 406.70,291.90 C404.20,291.90 402.50,290.10 402.30,286.30Z" fill="#a532d6"/><ellipse cx="406.70" cy="289.30" rx="1.8" ry="2" fill="#c94ef0"/>
<path d="M468.00,286.30 L470.20,287.90 L472.40,284.90 L474.60,287.90 L476.80,286.30 C476.60,290.10 474.90,291.90 472.40,291.90 C469.90,291.90 468.20,290.10 468.00,286.30Z" fill="#a532d6"/><ellipse cx="472.40" cy="289.30" rx="1.8" ry="2" fill="#c94ef0"/>
<path d="M539.70,286.30 L541.90,287.90 L544.10,284.90 L546.30,287.90 L548.50,286.30 C548.30,290.10 546.60,291.90 544.10,291.90 C541.60,291.90 539.90,290.10 539.70,286.30Z" fill="#a532d6"/><ellipse cx="544.10" cy="289.30" rx="1.8" ry="2" fill="#c94ef0"/>
<circle cx="708.30" cy="291.00" r="6.5" fill="#1f2c45"/><rect x="705.40" y="287.60" width="2" height="6.8" fill="#fff"/><rect x="709.20" y="287.60" width="2" height="6.8" fill="#fff"/>
<g fill="#2d2d2d"><rect x="181.90" y="285.30" width="6" height="1.1"/><rect x="181.90" y="287.05" width="6" height="1.1"/><rect x="181.90" y="288.80" width="6" height="1.1"/><rect x="181.90" y="290.55" width="6" height="1.1"/><rect x="181.90" y="292.30" width="6" height="1.1"/><path d="M187.90,285.00 L189.90,286.00 L189.90,294.00 L187.90,294.00Z"/><rect x="181.90" y="293.20" width="8" height="0.9"/></g>
<path d="M402.30,307.70 L404.50,309.30 L406.70,306.30 L408.90,309.30 L411.10,307.70 C410.90,311.50 409.20,313.30 406.70,313.30 C404.20,313.30 402.50,311.50 402.30,307.70Z" fill="#a532d6"/><ellipse cx="406.70" cy="310.70" rx="1.8" ry="2" fill="#c94ef0"/>
<path d="M468.00,307.70 L470.20,309.30 L472.40,306.30 L474.60,309.30 L476.80,307.70 C476.60,311.50 474.90,313.30 472.40,313.30 C469.90,313.30 468.20,311.50 468.00,307.70Z" fill="#a532d6"/><ellipse cx="472.40" cy="310.70" rx="1.8" ry="2" fill="#c94ef0"/>
<path d="M539.70,307.70 L541.90,309.30 L544.10,306.30 L546.30,309.30 L548.50,307.70 C548.30,311.50 546.60,313.30 544.10,313.30 C541.60,313.30 539.90,311.50 539.70,307.70Z" fill="#a532d6"/><ellipse cx="544.10" cy="310.70" rx="1.8" ry="2" fill="#c94ef0"/>
<circle cx="708.30" cy="312.40" r="6.5" fill="#1f2c45"/><rect x="705.40" y="309.00" width="2" height="6.8" fill="#fff"/><rect x="709.20" y="309.00" width="2" height="6.8" fill="#fff"/>
<g fill="#2d2d2d"><rect x="181.90" y="306.70" width="6" height="1.1"/><rect x="181.90" y="308.45" width="6" height="1.1"/><rect x="181.90" y="310.20" width="6" height="1.1"/><rect x="181.90" y="311.95" width="6" height="1.1"/><rect x="181.90" y="313.70" width="6" height="1.1"/><path d="M187.90,306.40 L189.90,307.40 L189.90,315.40 L187.90,315.40Z"/><rect x="181.90" y="314.60" width="8" height="0.9"/></g>
<path d="M402.30,329.10 L404.50,330.70 L406.70,327.70 L408.90,330.70 L411.10,329.10 C410.90,332.90 409.20,334.70 406.70,334.70 C404.20,334.70 402.50,332.90 402.30,329.10Z" fill="#a532d6"/><ellipse cx="406.70" cy="332.10" rx="1.8" ry="2" fill="#c94ef0"/>
<path d="M524.50,329.10 L526.70,330.70 L528.90,327.70 L531.10,330.70 L533.30,329.10 C533.10,332.90 531.40,334.70 528.90,334.70 C526.40,334.70 524.70,332.90 524.50,329.10Z" fill="#a532d6"/><ellipse cx="528.90" cy="332.10" rx="1.8" ry="2" fill="#c94ef0"/>
<circle cx="708.30" cy="333.80" r="6.5" fill="#1f2c45"/><rect x="705.40" y="330.40" width="2" height="6.8" fill="#fff"/><rect x="709.20" y="330.40" width="2" height="6.8" fill="#fff"/>
<g fill="#2d2d2d"><rect x="181.90" y="328.10" width="6" height="1.1"/><rect x="181.90" y="329.85" width="6" height="1.1"/><rect x="181.90" y="331.60" width="6" height="1.1"/><rect x="181.90" y="333.35" width="6" height="1.1"/><rect x="181.90" y="335.10" width="6" height="1.1"/><path d="M187.90,327.80 L189.90,328.80 L189.90,336.80 L187.90,336.80Z"/><rect x="181.90" y="336.00" width="8" height="0.9"/></g>
<path d="M402.30,350.50 L404.50,352.10 L406.70,349.10 L408.90,352.10 L411.10,350.50 C410.90,354.30 409.20,356.10 406.70,356.10 C404.20,356.10 402.50,354.30 402.30,350.50Z" fill="#a532d6"/><ellipse cx="406.70" cy="353.50" rx="1.8" ry="2" fill="#c94ef0"/>
<circle cx="708.30" cy="355.20" r="6.5" fill="#4ea41c"/><path d="M705.00,355.40 L707.40,357.80 L711.70,352.80" fill="none" stroke="#dff5cf" stroke-width="1.9"/>
<g fill="#2d2d2d"><rect x="181.90" y="349.50" width="6" height="1.1"/><rect x="181.90" y="351.25" width="6" height="1.1"/><rect x="181.90" y="353.00" width="6" height="1.1"/><rect x="181.90" y="354.75" width="6" height="1.1"/><rect x="181.90" y="356.50" width="6" height="1.1"/><path d="M187.90,349.20 L189.90,350.20 L189.90,358.20 L187.90,358.20Z"/><rect x="181.90" y="357.40" width="8" height="0.9"/></g>
<path d="M402.30,371.90 L404.50,373.50 L406.70,370.50 L408.90,373.50 L411.10,371.90 C410.90,375.70 409.20,377.50 406.70,377.50 C404.20,377.50 402.50,375.70 402.30,371.90Z" fill="#a532d6"/><ellipse cx="406.70" cy="374.90" rx="1.8" ry="2" fill="#c94ef0"/>
<path d="M524.50,371.90 L526.70,373.50 L528.90,370.50 L531.10,373.50 L533.30,371.90 C533.10,375.70 531.40,377.50 528.90,377.50 C526.40,377.50 524.70,375.70 524.50,371.90Z" fill="#a532d6"/><ellipse cx="528.90" cy="374.90" rx="1.8" ry="2" fill="#c94ef0"/>
<circle cx="708.30" cy="376.60" r="6.5" fill="#1f2c45"/><rect x="705.40" y="373.20" width="2" height="6.8" fill="#fff"/><rect x="709.20" y="373.20" width="2" height="6.8" fill="#fff"/>
<g fill="#2d2d2d"><rect x="181.90" y="370.90" width="6" height="1.1"/><rect x="181.90" y="372.65" width="6" height="1.1"/><rect x="181.90" y="374.40" width="6" height="1.1"/><rect x="181.90" y="376.15" width="6" height="1.1"/><rect x="181.90" y="377.90" width="6" height="1.1"/><path d="M187.90,370.60 L189.90,371.60 L189.90,379.60 L187.90,379.60Z"/><rect x="181.90" y="378.80" width="8" height="0.9"/></g>
<path d="M402.30,393.30 L404.50,394.90 L406.70,391.90 L408.90,394.90 L411.10,393.30 C410.90,397.10 409.20,398.90 406.70,398.90 C404.20,398.90 402.50,397.10 402.30,393.30Z" fill="#a532d6"/><ellipse cx="406.70" cy="396.30" rx="1.8" ry="2" fill="#c94ef0"/>
<circle cx="708.30" cy="398.00" r="6.5" fill="#4ea41c"/><path d="M705.00,398.20 L707.40,400.60 L711.70,395.60" fill="none" stroke="#dff5cf" stroke-width="1.9"/>
<g fill="#2d2d2d"><rect x="181.90" y="392.30" width="6" height="1.1"/><rect x="181.90" y="394.05" width="6" height="1.1"/><rect x="181.90" y="395.80" width="6" height="1.1"/><rect x="181.90" y="397.55" width="6" height="1.1"/><rect x="181.90" y="399.30" width="6" height="1.1"/><path d="M187.90,392.00 L189.90,393.00 L189.90,401.00 L187.90,401.00Z"/><rect x="181.90" y="400.20" width="8" height="0.9"/></g>
<path d="M402.30,414.70 L404.50,416.30 L406.70,413.30 L408.90,416.30 L411.10,414.70 C410.90,418.50 409.20,420.30 406.70,420.30 C404.20,420.30 402.50,418.50 402.30,414.70Z" fill="#a532d6"/><ellipse cx="406.70" cy="417.70" rx="1.8" ry="2" fill="#c94ef0"/>
<path d="M524.50,414.70 L526.70,416.30 L528.90,413.30 L531.10,416.30 L533.30,414.70 C533.10,418.50 531.40,420.30 528.90,420.30 C526.40,420.30 524.70,418.50 524.50,414.70Z" fill="#a532d6"/><ellipse cx="528.90" cy="417.70" rx="1.8" ry="2" fill="#c94ef0"/>
<circle cx="708.30" cy="419.40" r="6.5" fill="#d83a48"/><path d="M705.50,416.60 L711.10,422.20 M711.10,416.60 L705.50,422.20" stroke="#fff" stroke-width="1.9"/>
<g fill="#2d2d2d"><rect x="181.90" y="413.70" width="6" height="1.1"/><rect x="181.90" y="415.45" width="6" height="1.1"/><rect x="181.90" y="417.20" width="6" height="1.1"/><rect x="181.90" y="418.95" width="6" height="1.1"/><rect x="181.90" y="420.70" width="6" height="1.1"/><path d="M187.90,413.40 L189.90,414.40 L189.90,422.40 L187.90,422.40Z"/><rect x="181.90" y="421.60" width="8" height="0.9"/></g>
<g fill="#2d2d2d"><rect x="180.70" y="435.80" width="5" height="1.1"/><rect x="180.70" y="437.60" width="5" height="1.1"/><rect x="180.70" y="439.40" width="5" height="1.1"/><rect x="180.70" y="441.20" width="5" height="1.1"/><rect x="185.90" y="435.10" width="1.6" height="8.3"/><path d="M188.00,434.60 L191.00,435.40 L191.00,442.20 L188.00,442.20Z"/><rect x="180.70" y="442.50" width="7" height="0.9"/></g>
<!-- TICONS END -->
</svg>
</body></html>
